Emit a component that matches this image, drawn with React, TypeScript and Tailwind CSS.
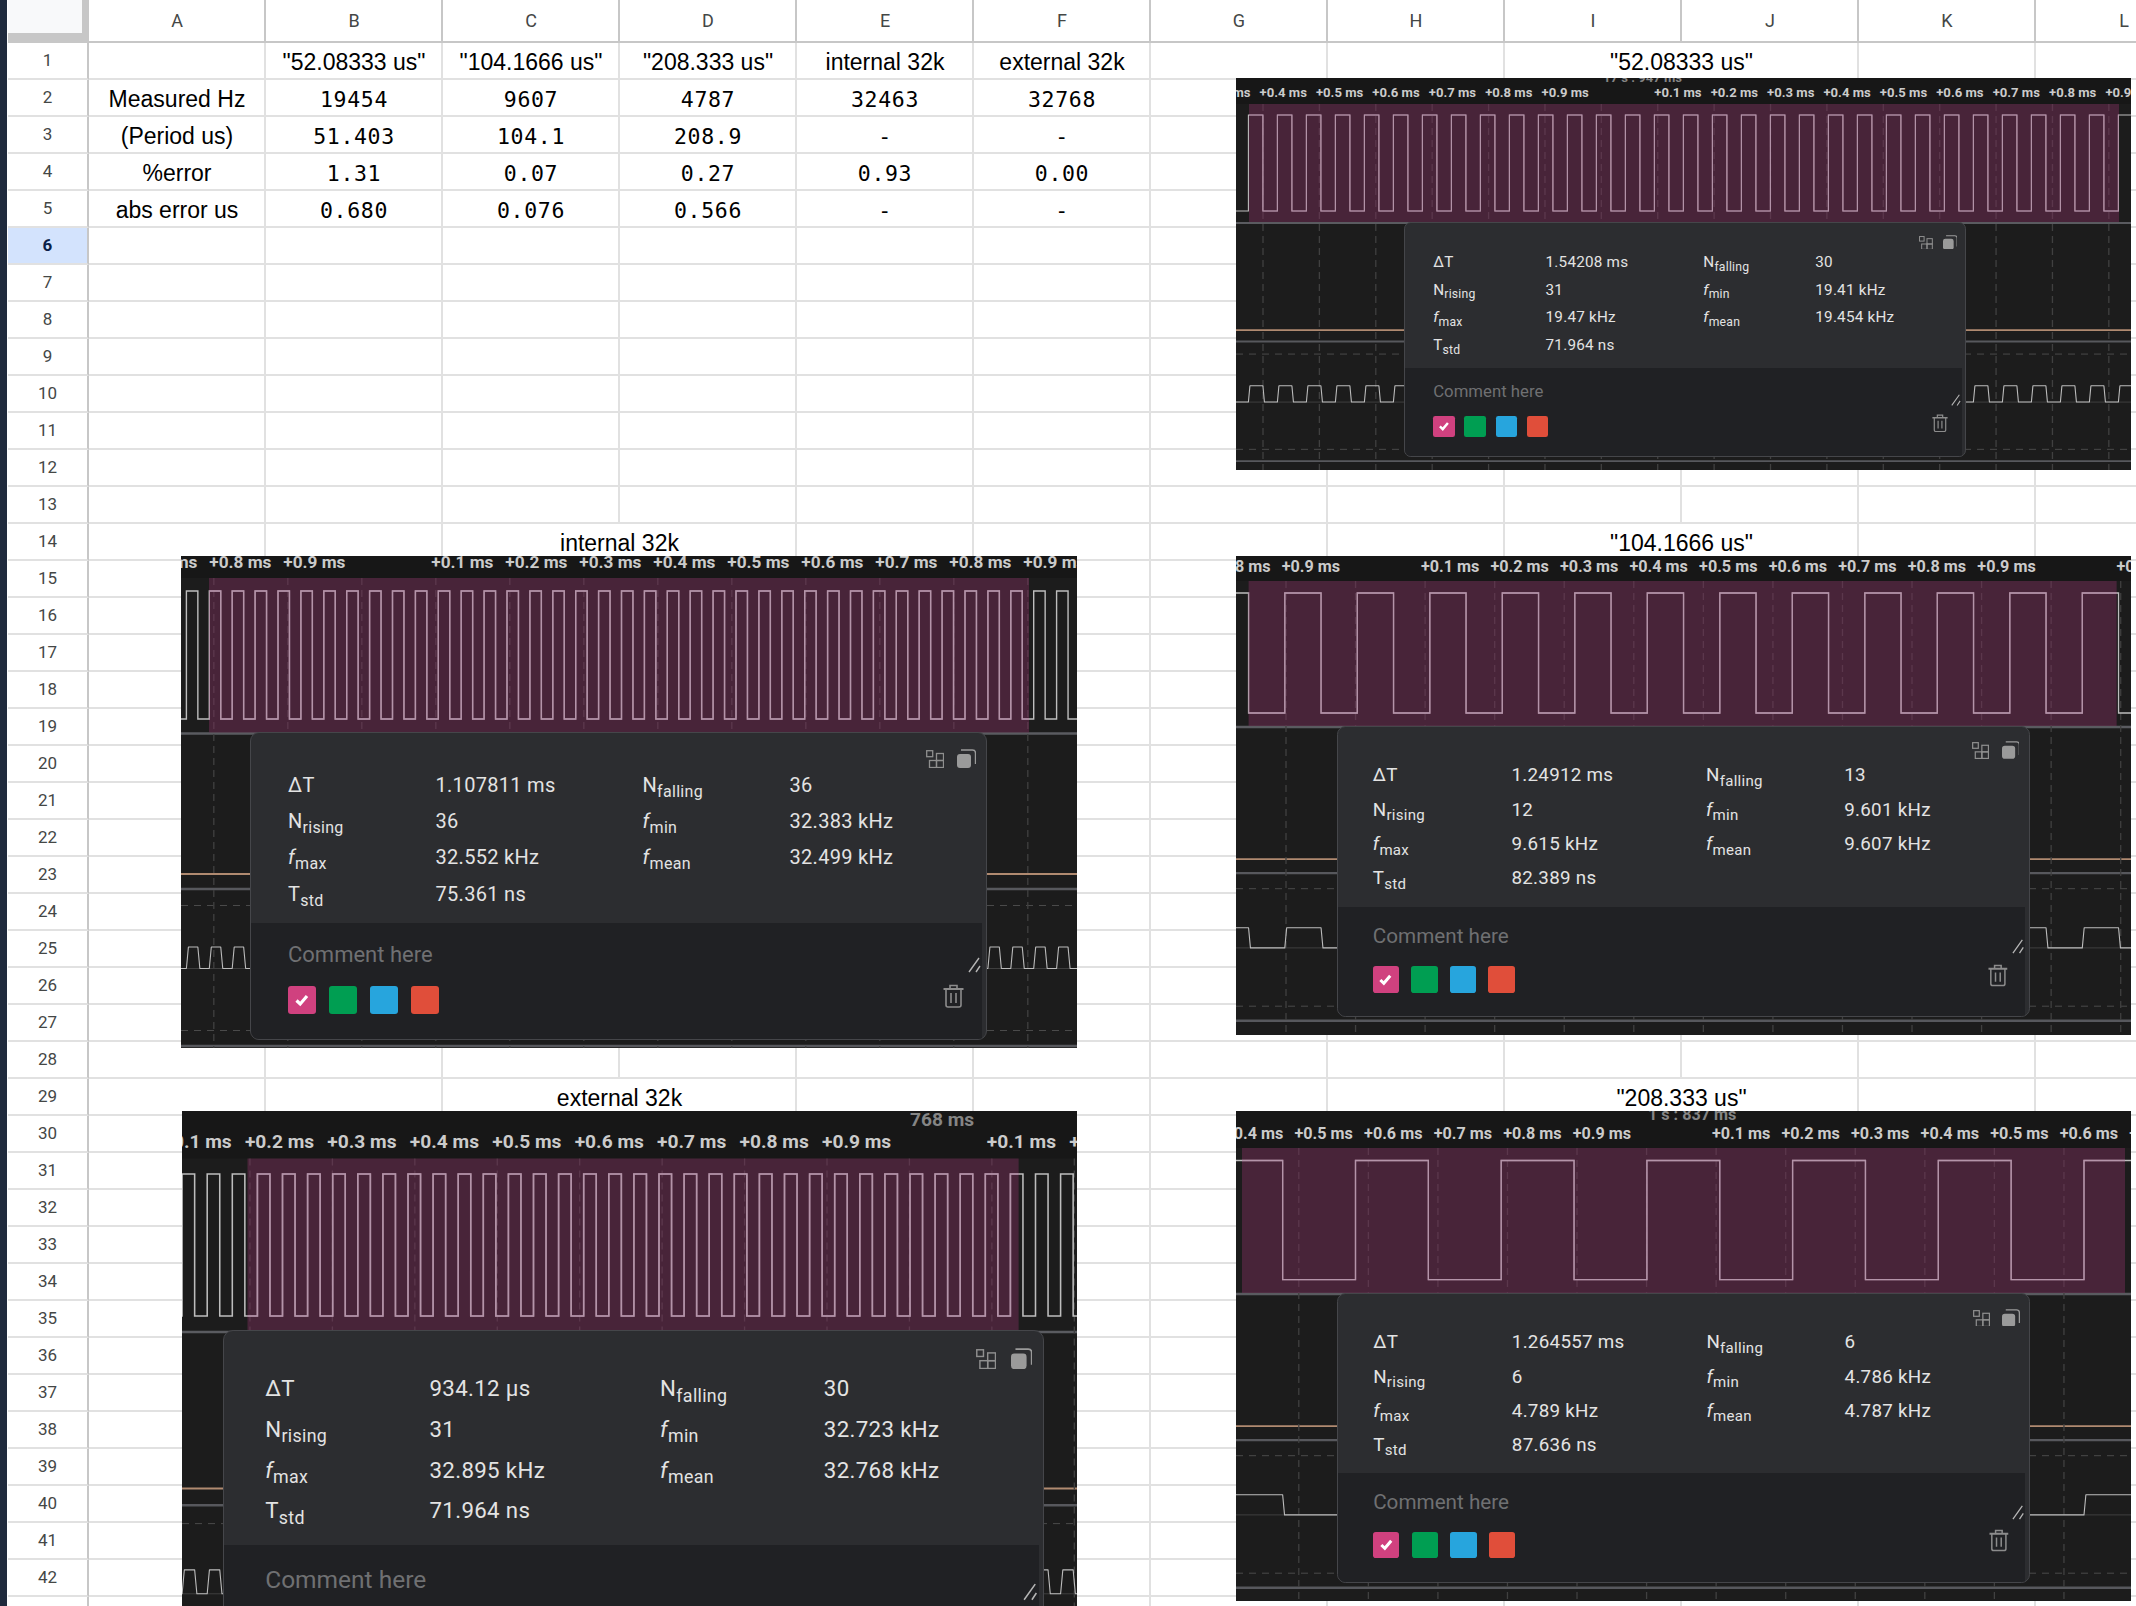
import React from "react";

const COLS = ["A","B","C","D","E","F","G","H","I","J","K","L"];

const DATA: Record<number, (string | undefined)[]> = {
  1: [undefined, '"52.08333 us"', '"104.1666 us"', '"208.333 us"', "internal 32k", "external 32k"],
  2: ["Measured Hz", "19454", "9607", "4787", "32463", "32768"],
  3: ["(Period us)", "51.403", "104.1", "208.9", "-", "-"],
  4: ["%error", "1.31", "0.07", "0.27", "0.93", "0.00"],
  5: ["abs error us", "0.680", "0.076", "0.566", "-", "-"],
};

const MERGED: Record<number, { col: number; text: string }[]> = {
  1: [{ col: 8, text: '"52.08333 us"' }],
  14: [{ col: 2, text: "internal 32k" }, { col: 8, text: '"104.1666 us"' }],
  29: [{ col: 2, text: "external 32k" }, { col: 8, text: '"208.333 us"' }],
};

function Row({ r }: { r: number }) {
  const cells: React.ReactNode[] = [];
  const merged = MERGED[r] || [];
  for (let c = 0; c < 12; c++) {
    const m = merged.find((x) => x.col === c);
    if (m) {
      cells.push(
        <div key={c} className="col-span-2 border-r-2 border-b-2 border-[#e1e1e1] flex items-center justify-center pt-[3px] pl-[1px] text-[23px] text-black font-['Liberation_Sans',sans-serif] whitespace-nowrap">
          {m.text}
        </div>
      );
      c++;
      continue;
    }
    const text = DATA[r]?.[c];
    const mono = r > 1 && c > 0;
    cells.push(
      <div
        key={c}
        className={
          mono
            ? "border-r-2 border-b-2 border-[#e1e1e1] flex items-center justify-center pt-[5px] pl-[1px] text-[21.5px] tracking-[0.65px] text-black font-['DejaVu_Sans_Mono',monospace] whitespace-nowrap"
            : "border-r-2 border-b-2 border-[#e1e1e1] flex items-center justify-center pt-[3px] pl-[1px] text-[23px] text-black font-['Liberation_Sans',sans-serif] whitespace-nowrap"
        }
      >
        {text}
      </div>
    );
  }
  return (
    <>
      <div
        className={
          r === 6
            ? "ml-[8px] border-r-2 border-b-2 border-r-[#c7c7c7] border-b-[#e1e1e1] bg-[#d3e3fd] flex items-center justify-center text-[17px] font-bold text-[#0b1f48] font-['Roboto',sans-serif]"
            : "ml-[8px] border-r-2 border-b-2 border-r-[#c7c7c7] border-b-[#e1e1e1] bg-white flex items-center justify-center text-[17px] text-[#444746] font-['Roboto',sans-serif]"
        }
      >
        {r}
      </div>
      {cells}
    </>
  );
}

function wavePath(rise: number, period: number, hi: number, lo: number, w: number, slant = 0) {
  let k = Math.floor(-rise / period) - 1;
  let d = `M-5 ${lo}`;
  while (rise + k * period < w + period) {
    const x = rise + k * period;
    const f = x + period / 2;
    d += ` L${x} ${lo} L${x + slant} ${hi} L${f} ${hi} L${f + slant} ${lo}`;
    k++;
  }
  return d;
}

type Pair = [string, string];
type ShotProps = {
  left: number; top: number; width: number; height: number; s: number;
  rulerBottom: number; selL: number; selR: number; g: number; hi: number; lo: number;
  rise: number; period: number; l0: number; labels: string[]; labelY: number;
  topLabel?: string; topLabelX?: number; popX: number; popY: number;
  rowH?: number; topH?: number;
  left2: Pair[]; right2: Pair[];
};

function LabelText({ name }: { name: string }) {
  const [base, sub] = name.split("_");
  return (
    <span className="whitespace-nowrap">
      <span className={base === "f" ? "italic" : ""}>{base}</span>
      <span className="relative top-[5px] text-[16px]">{sub}</span>
    </span>
  );
}

function Popup({ rows, rowH, topH }: { rows: Pair[][]; rowH: number; topH: number }) {
  return (
    <div
      className="w-[737px] rounded-[9px] border-[1.5px] border-[#45464a] bg-[#2c2d30] flex flex-col overflow-hidden font-['Roboto',sans-serif] text-[#e3e3e3]"
      style={{ height: topH + 118 }}
    >
      <div className="shrink-0" style={{ height: topH }}>
        <div className="h-[34.5px] flex justify-end items-end gap-[13px] pr-[10px]">
          <svg width="18" height="18" viewBox="0 0 18 18" fill="none" stroke="#8f8f8f" strokeWidth="1.3">
            <rect x="0.7" y="0.7" width="6" height="6" />
            <rect x="10.5" y="3.5" width="7" height="7" />
            <rect x="3.5" y="10.5" width="7" height="7" />
            <rect x="10.5" y="10.5" width="7" height="7" />
          </svg>
          <svg width="19" height="19" viewBox="0 0 19 19" fill="none">
            <rect x="0" y="5" width="14" height="14" rx="3" fill="#9a9a9a" />
            <path d="M4 1 H15.5 a3 3 0 0 1 3 3 V15" stroke="#9a9a9a" strokeWidth="1.4" />
          </svg>
        </div>
        <div
          className="grid grid-cols-[147.5px_207px_147px_auto] items-center pl-[37px] -mt-[1px] text-[20px] tracking-[0.3px]"
          style={{ gridAutoRows: rowH }}
        >
          {rows.flat().map((p, i) => (
            <React.Fragment key={i}>
              <LabelText name={p[0]} />
              <span className="whitespace-nowrap">{p[1]}</span>
            </React.Fragment>
          ))}
        </div>
      </div>
      <div className="relative flex-1 mr-[4px] bg-[#202124] pl-[37px] pr-[18px] pt-[13.5px]">
        <div className="h-[36px] flex items-center text-[22px] text-[#6f7072]">Comment here</div>
        <div className="mt-[13.5px] flex items-start justify-between">
          <div className="flex gap-[13px]">
            <div className="w-[28px] h-[28px] rounded-[3px] bg-[#d0417f] flex items-center justify-center">
              <svg width="16" height="16" viewBox="0 0 16 16" fill="none">
                <path d="M2.5 8.5 L6.2 12 L13 4" stroke="white" strokeWidth="3.2" />
              </svg>
            </div>
            <div className="w-[28px] h-[28px] rounded-[3px] bg-[#009e52]" />
            <div className="w-[28px] h-[28px] rounded-[3px] bg-[#27a5dd]" />
            <div className="w-[28px] h-[28px] rounded-[3px] bg-[#e04e3a]" />
          </div>
          <svg width="21" height="24" viewBox="0 0 21 24" fill="none" stroke="#8c8c8c" strokeWidth="1.6" className="-mt-[2.5px]">
            <path d="M0.5 5 H20.5" strokeWidth="2" />
            <path d="M7 4.5 V1.5 H14 V4.5" />
            <path d="M3 5 V21 a2 2 0 0 0 2 2 H16 a2 2 0 0 0 2 -2 V5" />
            <path d="M8 9 V19 M13 9 V19" />
          </svg>
        </div>
        <svg width="14" height="16" viewBox="0 0 14 16" className="absolute right-[0px] top-[34px]" fill="none" stroke="#b5b5b5" strokeWidth="1.4">
          <path d="M1 15 L11 1 M8 15 L12 9" />
        </svg>
      </div>
    </div>
  );
}

function Shot(p: ShotProps) {
  const { s, g } = p;
  const rowsFlat: Pair[][] = p.left2.map((l, i) => (p.right2[i] ? [l, p.right2[i]] : [l]));
  const ticks = p.labels.map((_, i) => p.l0 + i * 74 * s + 4.5 * s);
  const sw = Math.max(1.5, 2.4 * s);
  const hiL = g + 213.5 * s;
  const loL = g + 235 * s;
  const lw = Math.max(1.1, 1.4 * s);
  const selH = g - p.rulerBottom - 1;
  return (
    <div
      className="absolute overflow-hidden bg-[#1c1c1c]"
      style={{ left: p.left, top: p.top, width: p.width, height: p.height }}
    >
      <svg width={p.width} height={p.height} className="absolute left-0 top-0">
        <rect x="0" y="0" width={p.width} height={p.rulerBottom} fill="#171717" />
        {[140.5, 155.5, 312.5].map((d, i) => (
          <line key={i} x1="0" x2={p.width} y1={g + d * s} y2={g + d * s} stroke={i === 0 ? "#b08a70" : "#57585d"} strokeWidth={i === 0 ? 1.8 : sw} />
        ))}
        <line x1="0" x2={p.width} y1={g} y2={g} stroke="#5a5b60" strokeWidth={sw} />
        {[172, 297].map((d) => (
          <line key={d} x1="0" x2={p.width} y1={g + d * s} y2={g + d * s} stroke="#4a4a4a" strokeWidth="1" strokeDasharray="7 6" />
        ))}
        <line x1="0" x2={p.width} y1={loL} y2={loL} stroke="#3f3f3f" strokeWidth="1" />
        {ticks.map((x, i) => (
          <line key={i} x1={x} x2={x} y1={p.rulerBottom} y2={p.height} stroke="#404040" strokeWidth="1.3" strokeDasharray="7 5" />
        ))}
        <path d={wavePath(p.rise, p.period, p.hi, p.lo, p.width)} fill="none" stroke="#bdbdbd" strokeWidth={lw} />
        <path d={wavePath(p.rise, p.period, hiL, loL, p.width, 2 * s)} fill="none" stroke="#bcbcbc" strokeWidth="1.1" strokeLinejoin="round" />
        <rect x={p.selL} y={p.rulerBottom} width={p.selR - p.selL} height={selH} fill="#7a2f5a" fillOpacity="0.48" />
        <svg x={p.selL} y={p.rulerBottom} width={p.selR - p.selL} height={selH}>
          <path
            d={wavePath(p.rise - p.selL, p.period, p.hi - p.rulerBottom, p.lo - p.rulerBottom, p.selR - p.selL)}
            fill="none"
            stroke="#b494a9"
            strokeWidth={lw}
          />
        </svg>
      </svg>
      {p.labels.map((t, i) =>
        t ? (
          <span
            key={i}
            className="absolute -translate-y-1/2 whitespace-nowrap font-bold leading-none text-[#cbcbcb] font-['Roboto',sans-serif]"
            style={{ left: p.l0 + i * 74 * s, top: p.labelY, fontSize: 17.2 * s }}
          >
            {t} ms
          </span>
        ) : null
      )}
      {p.topLabel ? (
        <span
          className="absolute -translate-y-1/2 whitespace-nowrap font-bold leading-none text-[#858585] font-['Roboto',sans-serif]"
          style={{ left: p.topLabelX, top: p.labelY - 20 * s, fontSize: 17.2 * s }}
        >
          {p.topLabel}
        </span>
      ) : null}
      <div className="absolute" style={{ left: p.popX, top: p.popY }}>
        <div style={{ zoom: s }}>
          <Popup rows={rowsFlat} rowH={p.rowH ?? 36.3} topH={p.topH ?? 190} />
        </div>
      </div>
    </div>
  );
}

function pairs(dt: string, nr: string, fmax: string, tstd: string, nf: string, fmin: string, fmean: string) {
  return {
    left2: [["ΔT_", dt], ["N_rising", nr], ["f_max", fmax], ["T_std", tstd]] as Pair[],
    right2: [["N_falling", nf], ["f_min", fmin], ["f_mean", fmean]] as Pair[],
  };
}

const seq = (a: number, b: number) => {
  const out: string[] = [];
  for (let i = a; i <= b; i++) out.push(`+0.${i}`);
  return out;
};

const SHOTS: ShotProps[] = [
  {
    left: 1236, top: 78, width: 895, height: 392, s: 0.762,
    rulerBottom: 26, selL: 13, selR: 883, g: 145, hi: 37, lo: 133,
    rise: 12.4, period: 29, l0: -32.8, labels: [...seq(3, 9), "", ...seq(1, 9)], labelY: 15,
    topLabel: "17 s : 947 ms", topLabelX: 367, popX: 168, popY: 144,
    ...pairs("1.54208 ms", "31", "19.47 kHz", "71.964 ns", "30", "19.41 kHz", "19.454 kHz"),
  },
  {
    left: 181, top: 556, width: 896, height: 492, s: 1,
    rulerBottom: 22, selL: 28, selR: 848, g: 177.5, hi: 35, lo: 163,
    rise: 28.3, period: 22.9, l0: -45.7, labels: [...seq(7, 9), "", ...seq(1, 9)], labelY: 7,
    popX: 69, popY: 176,
    ...pairs("1.107811 ms", "36", "32.552 kHz", "75.361 ns", "36", "32.383 kHz", "32.499 kHz"),
  },
  {
    left: 182, top: 1111, width: 895, height: 495, s: 1.114,
    rulerBottom: 47.5, selL: 65.5, selR: 836.6, g: 221, hi: 63, lo: 205,
    rise: 75.4, period: 25.1, l0: -19.5, labels: [...seq(1, 9), "", ...seq(1, 9)], labelY: 31,
    topLabel: "768 ms", topLabelX: 728, popX: 41, popY: 219, rowH: 36.65, topH: 192.5,
    ...pairs("934.12 µs", "31", "32.895 kHz", "71.964 ns", "30", "32.723 kHz", "32.768 kHz"),
  },
  {
    left: 1236, top: 556, width: 895, height: 479, s: 0.94,
    rulerBottom: 25, selL: 12.6, selR: 880.6, g: 171, hi: 37, lo: 157,
    rise: 48.8, period: 72.5, l0: -23.8, labels: ["+0.8", "+0.9", "", ...seq(1, 9), "", "+0.1"], labelY: 10.7,
    popX: 101, popY: 169.7, rowH: 36.5, topH: 192,
    ...pairs("1.24912 ms", "12", "9.615 kHz", "82.389 ns", "13", "9.601 kHz", "9.607 kHz"),
  },
  {
    left: 1236, top: 1111, width: 895, height: 490, s: 0.94,
    rulerBottom: 37, selL: 6, selR: 889, g: 183, hi: 49.5, lo: 168.7,
    rise: 119.5, period: 145.7, l0: -11, labels: [...seq(4, 9), "", ...seq(1, 9)], labelY: 22.7,
    topLabel: "1 s : 837 ms", topLabelX: 412, popX: 101.4, popY: 182,
    ...pairs("1.264557 ms", "6", "4.789 kHz", "87.636 ns", "6", "4.786 kHz", "4.787 kHz"),
  },
];

export default function App() {
  const rows = Array.from({ length: 43 }, (_, i) => i + 1);
  return (
    <div className="relative w-[2136px] h-[1606px] overflow-hidden bg-white">
      <div className="grid grid-cols-[89px_repeat(12,177px)] grid-rows-[43px_repeat(43,37px)] w-[2213px]">
        <div className="ml-[8px] bg-[#c7c7c7] pr-[7px] pb-[10px]">
          <div className="h-full bg-[#f8f9fa]" />
        </div>
        {COLS.map((c) => (
          <div key={c} className="border-r-2 border-b-2 border-[#c7c7c7] flex items-center justify-center pl-[1px] text-[18px] text-[#444746] font-['Roboto',sans-serif]">
            {c}
          </div>
        ))}
        {rows.map((r) => (
          <Row key={r} r={r} />
        ))}
      </div>
      <div className="absolute left-0 top-0 h-full w-[7px] bg-[#1f2a3d]" />
      {SHOTS.map((s, i) => (
        <Shot key={i} {...s} />
      ))}
    </div>
  );
}
